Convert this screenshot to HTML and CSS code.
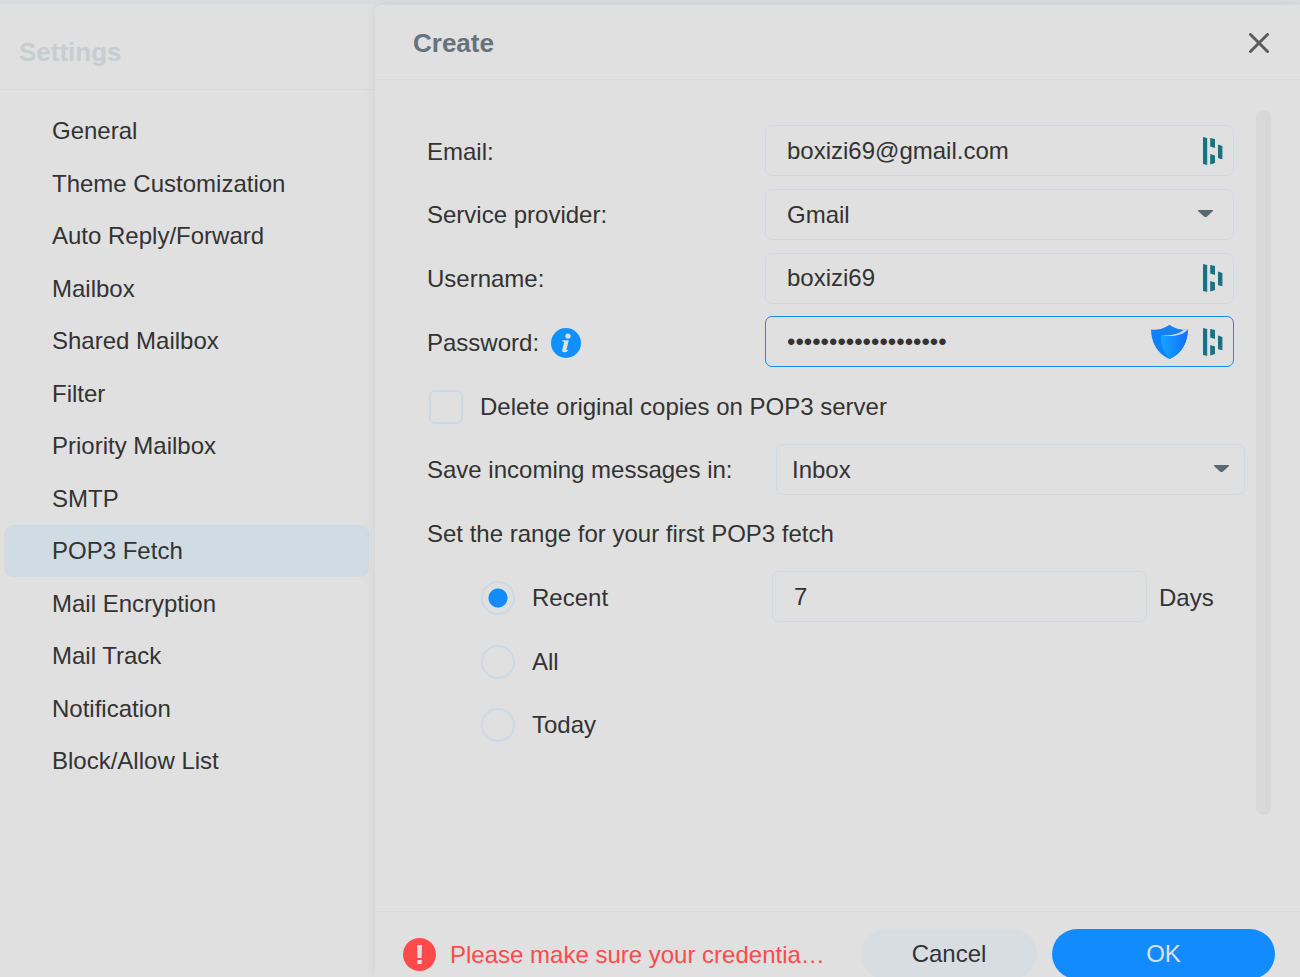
FILE: index.html
```
<!DOCTYPE html>
<html lang="en">
<head>
    <meta charset="utf-8">
    <meta name="viewport" content="width=device-width, initial-scale=1">
    <title>Settings - POP3 Fetch</title>
    <link rel="stylesheet" href="styles.css">
</head>
<body>
    <svg width="0" height="0" class="defs" aria-hidden="true">
        <symbol id="manager" viewBox="0 0 20 28">
            <path d="M0 0L4.200 1V28L0 27zM7.200 1L12 2V11L7.200 9.500zM7.200 17L12 18.500V26L7.200 27.500zM15 7.500L19.400 9V22.300L15 21.300z"/>
        </symbol>
        <symbol id="caret" viewBox="0 0 15 8">
            <path d="M0 0h15v1L8.500 7h-2L0 1z"/>
        </symbol>
    </svg>

    <div class="page">
        <aside class="sidebar">
            <h2 class="sidebar-title">Settings</h2>
            <nav class="menu">
                <a href="#">General</a>
                <a href="#">Theme Customization</a>
                <a href="#">Auto Reply/Forward</a>
                <a href="#">Mailbox</a>
                <a href="#">Shared Mailbox</a>
                <a href="#">Filter</a>
                <a href="#">Priority Mailbox</a>
                <a href="#">SMTP</a>
                <a href="#" class="active">POP3 Fetch</a>
                <a href="#">Mail Encryption</a>
                <a href="#">Mail Track</a>
                <a href="#">Notification</a>
                <a href="#">Block/Allow List</a>
            </nav>
        </aside>

        <form class="panel">
            <header class="panel-header">
                <h1>Create</h1>
                <button type="button" class="close-btn" aria-label="Close">
                    <svg width="20" height="20" viewBox="0 0 20 20"><path d="M1.500 1.500l17 17M18.500 1.500l-17 17"/></svg>
                </button>
            </header>

            <div class="panel-body">
                <div class="form-rows">
                    <div class="row">
                        <label for="email">Email:</label>
                        <div class="field">
                            <input type="text" id="email" class="control" value="boxizi69@gmail.com">
                            <span class="field-icons"><svg class="manager-icon"><use href="#manager"/></svg></span>
                        </div>
                    </div>
                    <div class="row">
                        <label for="provider">Service provider:</label>
                        <div class="field">
                            <select id="provider" class="control"><option>Gmail</option></select>
                            <svg class="caret"><use href="#caret"/></svg>
                        </div>
                    </div>
                    <div class="row">
                        <label for="username">Username:</label>
                        <div class="field">
                            <input type="text" id="username" class="control" value="boxizi69">
                            <span class="field-icons"><svg class="manager-icon"><use href="#manager"/></svg></span>
                        </div>
                    </div>
                    <div class="row">
                        <label for="password">Password:
                            <svg class="info-icon" width="30" height="30" viewBox="0 0 30 30">
                                <circle cx="15" cy="15" r="15" fill="#0e90ff"/>
                                <circle cx="17" cy="8" r="2.600" fill="#e0e0e0"/>
                                <path d="M11.500 12.200h6.300l-2.300 9.300c-.2.900.5.900 2 .3-1.200 2-3 2.800-4.700 2.500-1.400-.2-1.900-1.300-1.500-2.800l1.700-6.700c.2-.8-.4-1.100-1.900-1.200z" fill="#e0e0e0"/>
                            </svg>
                        </label>
                        <div class="field">
                            <input type="password" id="password" class="control focused" value="boxizi69boxizi69box">
                            <span class="field-icons">
                                <svg width="37" height="34" viewBox="0 0 37 34">
                                    <defs>
                                        <linearGradient id="shield" x1="0" x2="1">
                                            <stop offset="0" stop-color="#14a6ff"/>
                                            <stop offset="1" stop-color="#116fff"/>
                                        </linearGradient>
                                    </defs>
                                    <path d="M0 4.500C7 5.500 13 4 18.500 0 24 4 30 5.500 37 4.500 36.500 18 31 28.500 18.500 34 6 28.500.5 18 0 4.500z" fill="#0f82ff"/>
                                    <path d="M10 10c9 1 18 0 26.800-4C36 18.500 30.500 28.800 18.500 34 12.500 28 9.500 19 10 10z" fill="url(#shield)"/>
                                    <path d="M10 10c9 1 17.500-.5 23-5.300l3.500 0C32.500 9.800 22 12.500 10 10z" fill="#d3def0"/>
                                    <path d="M1 5c6 4 17 6 28.500 1.500L32 5C27 4.700 22.500 3 18.500 0 13 4 7 5.500 1 5z" fill="#1780f5"/>
                                </svg>
                                <svg class="manager-icon"><use href="#manager"/></svg>
                            </span>
                        </div>
                    </div>
                    <div class="row">
                        <label class="check-label"><input type="checkbox" class="checkbox">Delete original copies on POP3 server</label>
                    </div>
                    <div class="row row-folder">
                        <label for="folder">Save incoming messages in:</label>
                        <div class="field">
                            <select id="folder" class="control"><option>Inbox</option></select>
                            <svg class="caret"><use href="#caret"/></svg>
                        </div>
                    </div>
                    <div class="row"><span>Set the range for your first POP3 fetch</span></div>
                    <div class="row row-range">
                        <label class="radio-label"><input type="radio" name="range" class="radio" checked>Recent</label>
                        <input type="text" id="days" class="control" value="7">
                        <label for="days" class="days">Days</label>
                    </div>
                    <div class="row row-range">
                        <label class="radio-label"><input type="radio" name="range" class="radio">All</label>
                    </div>
                    <div class="row row-range">
                        <label class="radio-label"><input type="radio" name="range" class="radio">Today</label>
                    </div>
                </div>
                <div class="scrollbar"></div>
            </div>

            <footer class="panel-footer">
                <p class="error">
                    <svg width="33" height="33" viewBox="0 0 33 33">
                        <circle cx="16.500" cy="16.500" r="16.500" fill="#ff4a4a"/>
                        <path d="M14 7h5l-.4 13h-4.200zM14.300 22h4.400v4h-4.400z" fill="#e0e0e0"/>
                    </svg>
                    <span>Please make sure your credentia…</span>
                </p>
                <button type="button" class="btn btn-cancel">Cancel</button>
                <button type="submit" class="btn btn-ok">OK</button>
            </footer>
        </form>
    </div>
</body>
</html>
```

FILE: styles.css
```
* {
    box-sizing: border-box;
}

body {
    margin: 0;
    font-family: "Liberation Sans", Arial, sans-serif;
    font-size: 24px;
    color: #333;
    background-color: #dadcdf;
}

.defs {
    position: absolute;
}

.page {
    display: flex;
    height: 100vh;
    padding-top: 4px;
    overflow: hidden;
}

/* left menu */
.sidebar {
    width: 375px;
    flex: none;
    background-color: #e0e0e0;
}

.sidebar-title {
    margin: 0;
    padding: 0 19px;
    height: 86px;
    line-height: 96px;
    font-size: 26px;
    color: #c9cdd1;
    border-bottom: 1px solid #d8d9df;
}

.menu {
    display: flex;
    flex-direction: column;
    justify-content: space-between;
    min-height: 682px;
    margin: 15px 6px 0 4px;
}

.menu a {
    padding-left: 48px;
    line-height: 52px;
    color: #333;
    text-decoration: none;
    border-radius: 9px;
}

.menu a.active {
    background-color: #d0dce4;
}

/* right panel */
.panel {
    display: flex;
    flex-direction: column;
    flex: 1;
    min-width: 0;
    margin-top: 1px;
    background-color: #e0e0e0;
    border-top-left-radius: 6px;
    box-shadow: 0 0 16px rgba(0, 0, 0, 0.06);
}

.panel-header {
    display: flex;
    align-items: center;
    justify-content: space-between;
    height: 75px;
    flex: none;
    padding: 2px 31px 0 38px;
    border-bottom: 1px solid #d8d9df;
}

.panel-header h1 {
    margin: 0;
    font-size: 26px;
    color: #66727c;
}

.close-btn {
    display: flex;
    padding: 0;
    border: none;
    background: none;
    cursor: pointer;
}

.close-btn path {
    stroke: #5c5c5c;
    stroke-width: 3;
    stroke-linecap: round;
}

.panel-body {
    display: flex;
    flex: 1;
    min-height: 0;
    padding: 30px 29px 96px 52px;
}

.form-rows {
    display: flex;
    flex-direction: column;
    justify-content: space-between;
    flex: 1;
    height: 625px;
    margin-top: 15px;
}

.scrollbar {
    width: 15px;
    margin-left: 11px;
    border-radius: 8px;
    background-color: #d8d8d8;
}

.row {
    display: flex;
    align-items: center;
    height: 51px;
    margin-right: 11px;
}

.row > label {
    display: flex;
    align-items: center;
    width: 338px;
    flex: none;
    padding-top: 2px;
}

.row > span {
    padding-top: 2px;
}

.field {
    position: relative;
    flex: 1;
}

.control {
    display: block;
    width: 100%;
    height: 51px;
    padding: 0 21px;
    border: 1px solid #cdd9e5;
    border-radius: 7px;
    background: none;
    font: inherit;
    color: #333;
    outline: none;
    appearance: none;
}

.focused {
    border-color: #128bff;
}

/* icons lying over the right end of a control */
.field-icons {
    position: absolute;
    top: 0;
    right: 11px;
    height: 100%;
    display: flex;
    align-items: center;
    gap: 15px;
}

.manager-icon {
    width: 20px;
    height: 28px;
    fill: #177384;
}

.caret {
    position: absolute;
    top: 21px;
    right: 21px;
    width: 15px;
    height: 8px;
    fill: #5b6771;
    pointer-events: none;
}

.info-icon {
    margin-left: 12px;
}

.row > .check-label,
.row > .radio-label {
    width: auto;
    padding-top: 2px;
}

.checkbox,
.radio {
    width: 34px;
    height: 34px;
    margin: 0 17px 0 2px;
    border: 2px solid #cdd9e5;
    border-radius: 6px;
    appearance: none;
}

.radio {
    margin: 0 17px 0 0;
    border-radius: 50%;
}

.radio:checked {
    background: radial-gradient(circle, #128bff 9px, transparent 10px);
}

.row-folder {
    margin-right: 0;
}

.row-folder > label {
    width: 349px;
}

.row-folder .control {
    padding: 0 15px;
}

.row-folder .caret {
    right: 16px;
}

.row-range {
    padding-left: 54px;
}

.row-range > .radio-label {
    width: 291px;
}

.row-range > .days {
    width: 75px;
    margin-left: 12px;
}

/* footer */
.panel-footer {
    display: flex;
    align-items: flex-start;
    flex: none;
    height: 66px;
    padding: 17px 25px 0 28px;
    border-top: 1px solid #d8d9dc;
}

.error {
    display: flex;
    align-items: center;
    flex: 1;
    gap: 14px;
    height: 51px;
    margin: 0;
    color: #ff4a4a;
    white-space: nowrap;
}

.btn {
    height: 50px;
    padding: 0;
    border: none;
    border-radius: 25px;
    font: inherit;
    cursor: pointer;
}

.btn-cancel {
    width: 176px;
    background-color: #d8dde1;
    color: #333;
}

.btn-ok {
    width: 223px;
    margin-left: 15px;
    background-color: #128bff;
    color: #e0e0e0;
}
```
